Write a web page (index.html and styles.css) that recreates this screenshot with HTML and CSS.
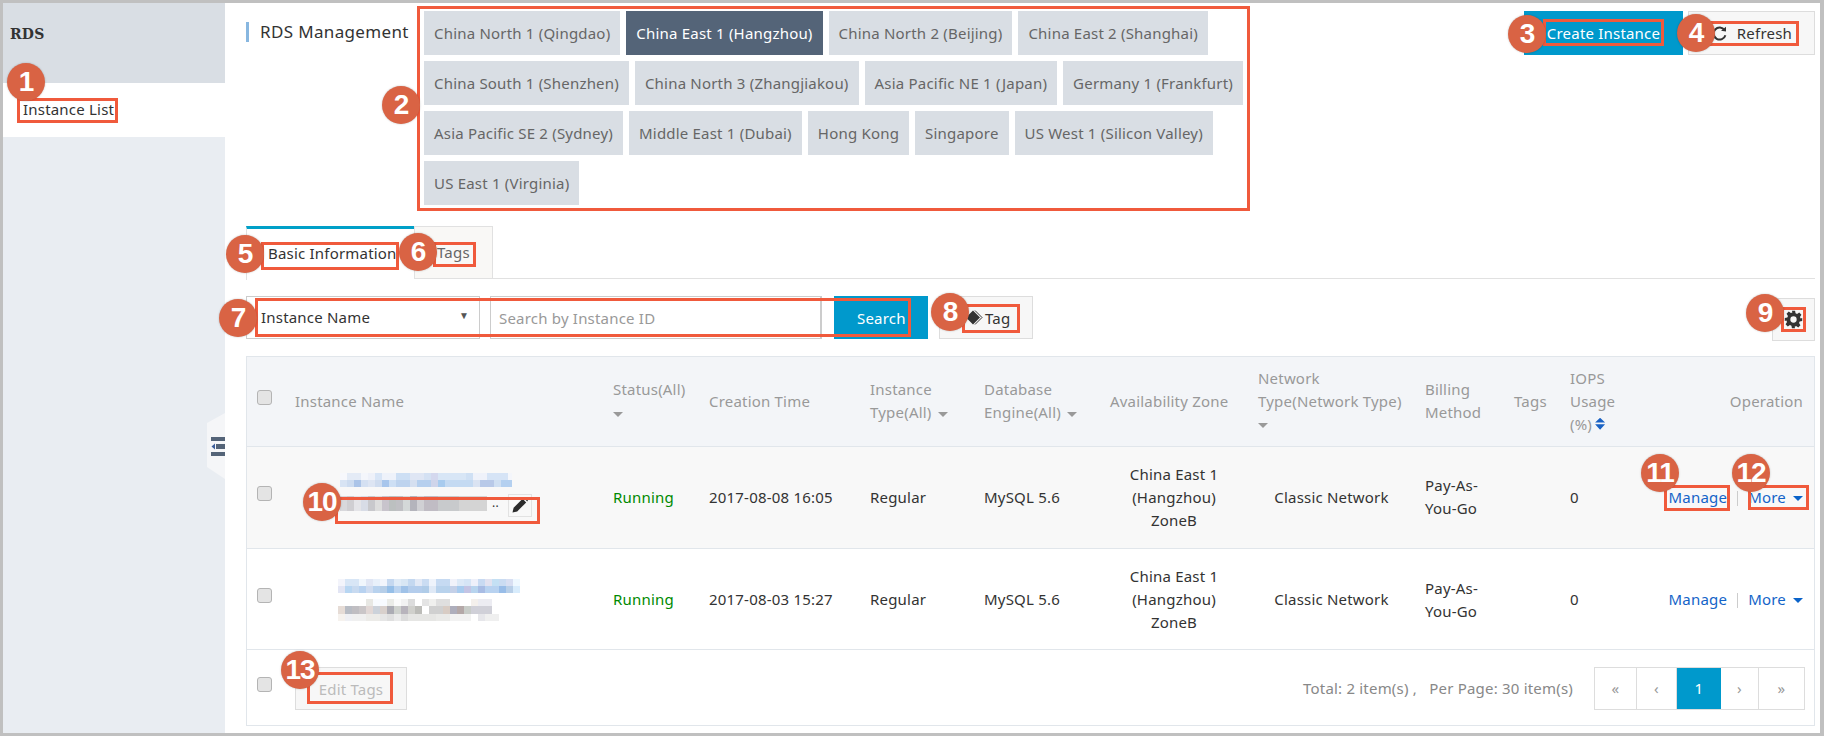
FILE: index.html
```html
<!DOCTYPE html>
<html>
<head>
    <meta charset="UTF-8">
    <title>RDS Management</title>
    <link rel="stylesheet" href="styles.css">
</head>
<body>
    <div class="frame">
        <div class="sidebar">
            <div class="sidebar-title">RDS</div>
            <div class="sidebar-item">Instance List</div>
            <div class="collapse-tab">
                <svg width="14" height="19" viewBox="0 0 14 19">
                    <rect x="0" y="0" width="14" height="4" fill="#546478"/>
                    <rect x="0" y="15" width="14" height="4" fill="#546478"/>
                    <rect x="5" y="7" width="9" height="5" fill="#546478"/>
                    <path d="M4 6.5 L0.5 9.5 L4 12.5 Z" fill="#3d5f9c"/>
                </svg>
            </div>
        </div>

        <div class="main">
            <div class="page-header">
                <div class="page-title">RDS Management</div>
                <div class="regions">
                    <a class="region">China North 1 (Qingdao)</a>
                    <a class="region active">China East 1 (Hangzhou)</a>
                    <a class="region">China North 2 (Beijing)</a>
                    <a class="region">China East 2 (Shanghai)</a>
                    <a class="region">China South 1 (Shenzhen)</a>
                    <a class="region">China North 3 (Zhangjiakou)</a>
                    <a class="region">Asia Pacific NE 1 (Japan)</a>
                    <a class="region">Germany 1 (Frankfurt)</a>
                    <a class="region">Asia Pacific SE 2 (Sydney)</a>
                    <a class="region">Middle East 1 (Dubai)</a>
                    <a class="region">Hong Kong</a>
                    <a class="region">Singapore</a>
                    <a class="region">US West 1 (Silicon Valley)</a>
                    <a class="region">US East 1 (Virginia)</a>
                </div>
                <div class="page-actions">
                    <button class="btn btn-primary btn-create">Create Instance</button>
                    <button class="btn btn-refresh">
                        <svg width="15" height="15" viewBox="0 0 15 15">
                            <path d="M12.6 4.2 A6 6 0 1 0 13.4 9.2" fill="none" stroke="#333" stroke-width="2"/>
                            <path d="M9 4.8 L14 5.6 L14 0.8 Z" fill="#333"/>
                        </svg>
                        Refresh
                    </button>
                </div>
            </div>

            <div class="tabs">
                <div class="tab active">Basic Information</div>
                <div class="tab">Tags</div>
            </div>

            <div class="toolbar">
                <div class="select-box">Instance Name<span class="select-arrow">&#9660;</span></div>
                <input class="search-input" type="text" placeholder="Search by Instance ID">
                <button class="btn btn-primary btn-search">Search</button>
                <button class="btn btn-tag">
                    <svg width="17" height="17" viewBox="0 0 17 17">
                        <path d="M0 8.5 L7 1.5 L14 8.5 L7 15.5 Z" fill="#333"/>
                        <path d="M9 1.5 L16 8.5 L9 15.5" fill="none" stroke="#333" stroke-width="1"/>
                    </svg>
                    Tag
                </button>
                <button class="btn btn-gear">
                    <svg width="19" height="19" viewBox="0 0 24 24">
                        <path fill="#333" fill-rule="evenodd" d="M10 1h4l.6 3.2 1.9.8 2.7-1.8 2.8 2.8-1.8 2.7.8 1.9L23 10v4l-3.2.6-.8 1.9 1.8 2.7-2.8 2.8-2.7-1.8-1.9.8L14 23h-4l-.6-3.2-1.9-.8-2.7 1.8-2.8-2.8 1.8-2.7-.8-1.9L1 14v-4l3.2-.6.8-1.9-1.8-2.7 2.8-2.8 2.7 1.8 1.9-.8zM12 8a4 4 0 1 0 0 8 4 4 0 0 0 0-8z"/>
                    </svg>
                </button>
            </div>

            <div class="table-wrap">
                <table class="instances">
                    <colgroup>
                        <col class="col-check">
                        <col class="col-name">
                        <col class="col-status">
                        <col class="col-time">
                        <col class="col-type">
                        <col class="col-engine">
                        <col class="col-zone">
                        <col class="col-network">
                        <col class="col-billing">
                        <col class="col-tags">
                        <col class="col-iops">
                        <col class="col-op">
                    </colgroup>
                    <thead>
                        <tr>
                            <th class="cell-check"><input class="check" type="checkbox"></th>
                            <th>Instance Name</th>
                            <th>Status(All)<br><span class="caret"></span></th>
                            <th>Creation Time</th>
                            <th>Instance<br>Type(All) <span class="caret caret-inline"></span></th>
                            <th>Database<br>Engine(All) <span class="caret caret-inline"></span></th>
                            <th>Availability Zone</th>
                            <th>Network<br>Type(Network Type)<br><span class="caret"></span></th>
                            <th>Billing<br>Method</th>
                            <th>Tags</th>
                            <th>IOPS<br>Usage<br>(%)<span class="sort"></span></th>
                            <th class="cell-op">Operation</th>
                        </tr>
                    </thead>
                    <tbody>
                        <tr class="row-hover">
                            <td class="cell-check"><input class="check" type="checkbox"></td>
                            <td>
                                <div class="name-blur name-first">
                                    <div class="blur-line first-a"></div>
                                    <div class="blur-line first-b"></div>
                                    <div class="name-edit">
                                        <div class="blur-line first-c"></div>
                                        <span class="dots">..</span>
                                        <span class="edit-btn">
                                            <svg width="16" height="16" viewBox="0 0 16 16">
                                                <path d="M0.5 15.5 L1.6 10.8 L10.6 1.8 L14.2 5.4 L5.2 14.4 Z" fill="#2b2b2b"/>
                                                <path d="M11.6 0.8 L12.6 0.2 Q13.2 0 13.8 0.5 L15.5 2.2 Q16 2.8 15.8 3.4 L15.2 4.4 Z" fill="#2b2b2b"/>
                                            </svg>
                                        </span>
                                    </div>
                                </div>
                            </td>
                            <td class="status-running">Running</td>
                            <td>2017-08-08 16:05</td>
                            <td>Regular</td>
                            <td>MySQL 5.6</td>
                            <td class="cell-center">China East 1<br>(Hangzhou)<br>ZoneB</td>
                            <td class="cell-center">Classic Network</td>
                            <td>Pay-As-<br>You-Go</td>
                            <td></td>
                            <td>0</td>
                            <td class="cell-op"><a class="link">Manage</a><span class="divider"></span><a class="link">More</a><span class="caret caret-blue"></span></td>
                        </tr>
                        <tr class="row-last">
                            <td class="cell-check"><input class="check" type="checkbox"></td>
                            <td>
                                <div class="name-blur name-second">
                                    <div class="blur-line second-a"></div>
                                    <div class="blur-line second-b"></div>
                                    <div class="blur-gap"></div>
                                    <div class="blur-line second-c"></div>
                                    <div class="blur-line second-d"></div>
                                    <div class="blur-line second-e"></div>
                                </div>
                            </td>
                            <td class="status-running">Running</td>
                            <td>2017-08-03 15:27</td>
                            <td>Regular</td>
                            <td>MySQL 5.6</td>
                            <td class="cell-center">China East 1<br>(Hangzhou)<br>ZoneB</td>
                            <td class="cell-center">Classic Network</td>
                            <td>Pay-As-<br>You-Go</td>
                            <td></td>
                            <td>0</td>
                            <td class="cell-op"><a class="link">Manage</a><span class="divider"></span><a class="link">More</a><span class="caret caret-blue"></span></td>
                        </tr>
                    </tbody>
                </table>
                <div class="table-footer">
                    <input class="check" type="checkbox">
                    <button class="btn btn-disabled">Edit Tags</button>
                    <div class="page-info">Total: 2 item(s) ,&nbsp;&nbsp; Per Page: 30 item(s)</div>
                    <div class="pager">
                        <a class="page-first">&laquo;</a>
                        <a class="page-prev">&lsaquo;</a>
                        <a class="page-cur">1</a>
                        <a class="page-next">&rsaquo;</a>
                        <a class="page-last">&raquo;</a>
                    </div>
                </div>
            </div>
        </div>
    </div>

    <!-- callouts drawn over the screenshot -->
    <div class="box box-1"></div>
    <div class="box box-2"></div>
    <div class="box box-3"></div>
    <div class="box box-4"></div>
    <div class="box box-5"></div>
    <div class="box box-6"></div>
    <div class="box box-7"></div>
    <div class="box box-8"></div>
    <div class="box box-9"></div>
    <div class="box box-10"></div>
    <div class="box box-11"></div>
    <div class="box box-12"></div>
    <div class="box box-13"></div>

    <div class="num num-1">1</div>
    <div class="num num-2">2</div>
    <div class="num num-3">3</div>
    <div class="num num-4">4</div>
    <div class="num num-5">5</div>
    <div class="num num-6">6</div>
    <div class="num num-7">7</div>
    <div class="num num-8">8</div>
    <div class="num num-9">9</div>
    <div class="num num-10">10</div>
    <div class="num num-11">11</div>
    <div class="num num-12">12</div>
    <div class="num num-13">13</div>
</body>
</html>
```

FILE: styles.css
```css
* {
    box-sizing: border-box;
}

body {
    margin: 0;
    width: 1824px;
    height: 736px;
    overflow: hidden;
    position: relative;
    font-family: "Noto Sans", sans-serif;
    font-size: 15px;
    letter-spacing: 0.2px;
    color: #333;
    background: white;
}

.frame {
    display: flex;
    height: 736px;
    border: solid #c0c0c0;
    border-width: 3px 4px 3px 3px;
}

/* sidebar */
.sidebar {
    width: 222px;
    flex-shrink: 0;
    background: #e9edf2;
    position: relative;
}

.sidebar-title {
    height: 80px;
    padding: 23px 7px;
    background: #d9dee4;
    font-family: "DejaVu Serif", serif;
    font-size: 14px;
    font-weight: bold;
}

.sidebar-item {
    height: 54px;
    padding: 16px 20px;
    background: white;
}

.collapse-tab {
    position: absolute;
    right: 0;
    top: 410px;
    width: 18px;
    height: 66px;
    background: #f5f6f8;
    clip-path: polygon(0 10px, 100% 0, 100% 100%, 0 calc(100% - 12px));
    padding: 24px 0 0 4px;
}

/* main column */
.main {
    flex: 1;
    padding: 8px 5px 8px 21px;
    background: white;
}

.page-header {
    display: flex;
    align-items: flex-start;
}

.page-title {
    width: 178px;
    height: 20px;
    margin-top: 11px;
    padding-left: 11px;
    border-left: 3px solid #88b7e0;
    font-size: 17px;
    letter-spacing: 0.35px;
    line-height: 20px;
    white-space: nowrap;
}

.regions {
    width: 826px;
    display: flex;
    flex-wrap: wrap;
    gap: 6px;
}

.region {
    height: 44px;
    line-height: 44px;
    padding: 0 10px;
    background: #d9dee4;
    color: #666;
}

.region.active {
    background: #546478;
    color: white;
}

.page-actions {
    margin-left: auto;
    display: flex;
    gap: 5px;
}

.btn {
    height: 43px;
    padding: 0;
    border: 1px solid #ddd;
    background: #f7f7f7;
    color: #333;
    font-family: inherit;
    font-size: 15px;
    letter-spacing: inherit;
}

.btn-primary {
    border: none;
    background: #0099cc;
    color: white;
}

.btn-create {
    width: 159px;
    height: 44px;
}

.btn-refresh {
    width: 127px;
    height: 44px;
    display: flex;
    align-items: center;
    justify-content: flex-end;
    padding-right: 22px;
    gap: 10px;
}

/* tabs */
.tabs {
    display: flex;
    height: 53px;
    margin-top: 21px;
    border-bottom: 1px solid #e1e1e1;
}

.tab {
    width: 79px;
    padding-left: 22px;
    line-height: 50px;
    background: #f9f8f6;
    border: 1px solid #e1e1e1;
    border-bottom: none;
    color: #666;
}

.tab.active {
    width: 168px;
    padding-left: 21px;
    background: white;
    border: none;
    border-left: 1px solid #e1e1e1;
    border-top: 3px solid #00a0c8;
    color: #333;
    line-height: 48px;
    height: 54px;
}

/* search row */
.toolbar {
    display: flex;
    align-items: flex-start;
    margin-top: 17px;
}

.select-box {
    width: 234px;
    height: 43px;
    margin-right: 10px;
    border: 1px solid #ccc;
    padding: 0 10px 0 14px;
    line-height: 41px;
    display: flex;
    justify-content: space-between;
}

.select-arrow {
    font-size: 10px;
    color: #555;
    margin-top: -2px;
}

.search-input {
    width: 332px;
    height: 43px;
    border: 1px solid #ccc;
    border-right-width: 2px;
    padding: 0 8px;
    font-family: inherit;
    font-size: 15px;
    letter-spacing: inherit;
    color: #333;
}

.search-input::placeholder {
    color: #999;
}

.btn-search {
    width: 94px;
    margin-left: 12px;
    padding-left: 23px;
    text-align: left;
}

.btn-tag {
    width: 94px;
    margin-left: 11px;
    display: flex;
    align-items: center;
    padding-left: 26px;
    gap: 2px;
}

.btn-gear {
    width: 43px;
    margin-left: auto;
    margin-top: 2px;
    display: flex;
    align-items: center;
    padding-left: 11px;
}

/* table */
.table-wrap {
    margin-top: 15px;
    border: 1px solid #e1e6eb;
}

.instances {
    width: 100%;
    border-collapse: collapse;
    table-layout: fixed;
    line-height: 23px;
}

.col-check { width: 38px; }
.col-name { width: 318px; }
.col-status { width: 96px; }
.col-time { width: 161px; }
.col-type { width: 114px; }
.col-engine { width: 126px; }
.col-zone { width: 148px; }
.col-network { width: 167px; }
.col-billing { width: 89px; }
.col-tags { width: 56px; }
.col-iops { width: 90px; }
.col-op { width: 164px; }

.instances th {
    height: 89px;
    padding: 0 10px;
    background: #f3f5f8;
    border-bottom: 1px solid #e1e6eb;
    color: #999;
    font-weight: normal;
    text-align: left;
    white-space: nowrap;
}

.instances td {
    height: 102px;
    padding: 0 10px;
    border-bottom: 1px solid #e1e6eb;
    white-space: nowrap;
}

.instances .row-last td {
    height: 101px;
    padding-top: 2px;
}

.row-hover td {
    background: #f8f8f8;
}

.instances .cell-check {
    padding: 0 0 8px 10px;
}

.instances .cell-center {
    text-align: center;
}

.instances .cell-op {
    text-align: right;
    padding-right: 11px;
}

.status-running {
    color: #008a00;
}

.check {
    appearance: none;
    display: block;
    width: 15px;
    height: 15px;
    margin: 0;
    background: #e4e4e4;
    border: 1px solid #b4b4b4;
    border-radius: 3px;
}

.caret {
    display: inline-block;
    border: solid transparent;
    border-width: 5px 5px 0;
    border-top-color: #999;
    vertical-align: middle;
}

.caret-inline {
    margin-left: 2px;
}

.caret-blue {
    border-width: 5px 5.5px 0;
    border-top-color: #0a63c9;
    margin-left: 7px;
}

.sort {
    display: inline-block;
    width: 10px;
    height: 12px;
    margin-left: 3px;
    background: #1a62c4;
    clip-path: polygon(50% 0, 100% 40%, 0 40%, 0 55%, 100% 55%, 50% 100%, 0 55%, 0 40%);
}

.link {
    color: #1464c8;
}

.divider {
    display: inline-block;
    width: 1px;
    height: 15px;
    margin: 0 10px;
    background: #ccc;
    vertical-align: middle;
}

/* pixelated instance names */
.name-blur {
    position: relative;
}

.blur-line {
    height: 7px;
}

.blur-gap {
    height: 6px;
}

.name-first {
    margin-left: 45px;
    margin-top: -2px;
}

.name-second {
    margin-left: 43px;
}

.name-edit {
    display: flex;
    align-items: flex-start;
    height: 24px;
    margin-top: 9px;
}

.first-a {
    width: 172px;
    background: linear-gradient(90deg, #f7f8fc 7px, #e4ebf6 7px 21px, #f4f6fb 21px 28px, #eef1f9 28px 35px, #d8e5f6 35px 42px, #eef2fa 42px 56px, #cddff4 56px 70px, #dfe6f4 70px 84px, #d4e1f3 84px 91px, #d4d8ee 91px 98px, #d8e6f6 98px 126px, #cfe0f4 126px 133px, #eff2fa 133px 147px, #d6e4f6 147px 168px, #f4f6fb 168px);
}

.first-b {
    width: 172px;
    background: linear-gradient(90deg, #d8e4f4 7px, #cddcf0 7px 14px, #abc4e8 14px 21px, #d4e0f2 21px 28px, #dde5f3 28px 35px, #cfdcef 35px 42px, #a8c6ec 42px 49px, #cddff4 49px 56px, #bdd3ee 56px 70px, #d5dff0 70px 77px, #b6cfee 77px 91px, #cfd4ea 91px 98px, #a8cbee 98px 105px, #c4daf2 105px 133px, #dae3f2 133px 140px, #b8c9e8 140px 154px, #cfdff2 154px 161px, #b4d0f0 161px);
}

.first-c {
    width: 147px;
    height: 15px;
    background: linear-gradient(90deg, #d8d8dc 7px, #cfced2 7px 14px, #e4e4e8 14px 21px, #d8dce6 21px 28px, #c8c8cc 28px 35px, #dddddd 35px 42px, #c8c4cc 42px 49px, #bcc0c0 49px 56px, #c0c0c4 56px 63px, #d4d8d8 63px 70px, #b4b4bc 70px 77px, #d0d0d4 77px 84px, #c0bcc4 84px 98px, #c8cacc 98px 119px, #d4d4d4 119px 147px);
}

.second-a {
    width: 182px;
    background: linear-gradient(90deg, #f3f4fb 7px, #d8e6f6 7px 21px, #f0f6fc 21px 28px, #e0e6f4 28px 35px, #e8f0fa 35px 42px, #f2f5fc 42px 49px, #c5d8f0 49px 56px, #e0ebf7 56px 63px, #d8e6f4 63px 70px, #c4d8f0 70px 77px, #e2e9f6 77px 84px, #cadcf2 84px 91px, #eef3fb 91px 98px, #c6daf2 98px 112px, #f1f2fa 112px 119px, #dde9f7 119px 126px, #d6e5f6 126px 133px, #eef0fa 133px 140px, #c8daf2 140px 147px, #e2e2f0 147px 154px, #c4e0f4 154px 161px, #cadcf2 161px 168px, #d8dff2 168px 175px, #eef8ff 175px);
}

.second-b {
    width: 182px;
    background: linear-gradient(90deg, #e2e5f4 7px, #b8d6f2 7px 14px, #c8daf0 14px 21px, #b8d2f0 21px 28px, #cfdcf0 28px 35px, #b8d2ee 35px 42px, #b6cee8 42px 49px, #96bfe8 49px 56px, #bcd4f0 56px 63px, #a0c2e8 63px 70px, #b4cdec 70px 84px, #b0cce8 84px 91px, #dfe9f6 91px 98px, #b8d2ec 98px 112px, #c4d0e8 112px 119px, #a8cbee 119px 126px, #c4c4e4 126px 133px, #b8d4ee 133px 140px, #a8bce4 140px 147px, #b8d2f0 147px 161px, #98bde8 161px 168px, #b8cfe8 168px 175px, #d8ecfc 175px);
}

.second-c {
    width: 154px;
    background: linear-gradient(90deg, white 28px, #e8e8e4 28px 35px, #f8fbff 35px 49px, #ebece8 49px 56px, #fbfbfb 56px 63px, #f2f2f2 63px 70px, #dcdcdc 70px 77px, white 77px 84px, #e4e4e4 84px 91px, #f0f0ee 91px 98px, #dfdfdf 98px 112px, white 112px 133px, #f4f0ec 133px 140px, #ececf2 140px);
}

.second-d {
    width: 154px;
    height: 8px;
    background: linear-gradient(90deg, #e6dcd6 7px, #b8bcc4 7px 14px, #c0bec2 14px 21px, #cac6c8 21px 28px, #e2d8d6 28px 35px, #ccd2da 35px 42px, #d8d0cc 42px 49px, #acacb4 49px 56px, #cfd2ce 56px 63px, #b8b4bc 63px 70px, #d0d0cc 70px 77px, #bcbcb8 77px 84px, white 84px 91px, #d0d0d0 91px 105px, #d8ccc4 105px 112px, #aeaebc 112px 119px, #b4a8a8 119px 126px, #c8ccc8 126px 133px, #d0d0d8 133px 140px);
}

.second-e {
    width: 161px;
    background: linear-gradient(90deg, #f6f2ee 7px, #eff0f4 7px 14px, #f0f0f0 14px 28px, #ecebe8 28px 42px, #e6e6e6 42px 49px, #dfdfdf 49px 56px, #ebebeb 56px 63px, #dcdcdc 63px 70px, #e6e6e4 70px 98px, #eaeae8 98px 112px, #f2f2f2 112px 133px, white 133px 140px, #e6e6ea 140px 147px, #efefef 147px);
}

.dots {
    margin-left: 5px;
    line-height: 14px;
    color: #333;
    font-size: 12px;
}

.edit-btn {
    width: 24px;
    height: 23px;
    margin-left: 9px;
    margin-top: -2px;
    border: 1px solid #e2e2e2;
    display: flex;
    align-items: center;
    justify-content: center;
}

/* footer of the table */
.table-footer {
    display: flex;
    align-items: center;
    height: 75px;
    padding: 0 9px 0 10px;
    line-height: 23px;
}

.table-footer .check {
    margin-bottom: 6px;
}

.btn-disabled {
    width: 112px;
    margin-left: 23px;
    color: #bbb;
    margin-top: 3px;
}

.page-info {
    margin-left: auto;
    margin-right: 21px;
    color: #888;
    margin-top: 3px;
}

.pager {
    display: flex;
    height: 43px;
    margin-top: 3px;
    border: 1px solid #ddd;
}

.pager a {
    line-height: 41px;
    text-align: center;
    border-right: 1px solid #ddd;
    color: #999;
}

.page-first { width: 42px; }
.page-prev { width: 40px; }
.page-next { width: 38px; }

.pager .page-cur {
    width: 44px;
    background: #0099cc;
    color: white;
    border: none;
}

.pager .page-last {
    width: 45px;
    border-right: none;
}

/* callouts */
.box {
    position: absolute;
    border: 3px solid #f05a3c;
}

.box-1 { left: 17px; top: 98px; width: 101px; height: 25px; }
.box-2 { left: 417px; top: 6px; width: 833px; height: 205px; }
.box-3 { left: 1543px; top: 19px; width: 121px; height: 27px; }
.box-4 { left: 1700px; top: 21px; width: 99px; height: 25px; }
.box-5 { left: 261px; top: 242px; width: 138px; height: 28px; }
.box-6 { left: 433px; top: 242px; width: 43px; height: 25px; }
.box-7 { left: 255px; top: 298px; width: 656px; height: 39px; }
.box-8 { left: 962px; top: 304px; width: 58px; height: 29px; }
.box-9 { left: 1781px; top: 307px; width: 25px; height: 25px; }
.box-10 { left: 335px; top: 497px; width: 205px; height: 27px; }
.box-11 { left: 1664px; top: 485px; width: 66px; height: 26px; }
.box-12 { left: 1748px; top: 485px; width: 61px; height: 25px; }
.box-13 { left: 307px; top: 672px; width: 86px; height: 32px; }

.num {
    position: absolute;
    width: 38px;
    height: 38px;
    border-radius: 50%;
    background: #d96344;
    box-shadow: 0 0 2px rgba(0, 0, 0, 0.25);
    color: white;
    font-family: "Liberation Sans", Arial, sans-serif;
    font-size: 28px;
    font-weight: bold;
    line-height: 38px;
    text-align: center;
    letter-spacing: -1px;
}

.num-1 { left: 7px; top: 63px; }
.num-2 { left: 382px; top: 86px; }
.num-3 { left: 1508px; top: 15px; }
.num-4 { left: 1677px; top: 14px; }
.num-5 { left: 226px; top: 235px; }
.num-6 { left: 399px; top: 233px; }
.num-7 { left: 219px; top: 299px; }
.num-8 { left: 931px; top: 293px; }
.num-9 { left: 1746px; top: 294px; }
.num-10 { left: 303px; top: 483px; }
.num-11 { left: 1641px; top: 454px; }
.num-12 { left: 1732px; top: 454px; }
.num-13 { left: 281px; top: 651px; }
```
